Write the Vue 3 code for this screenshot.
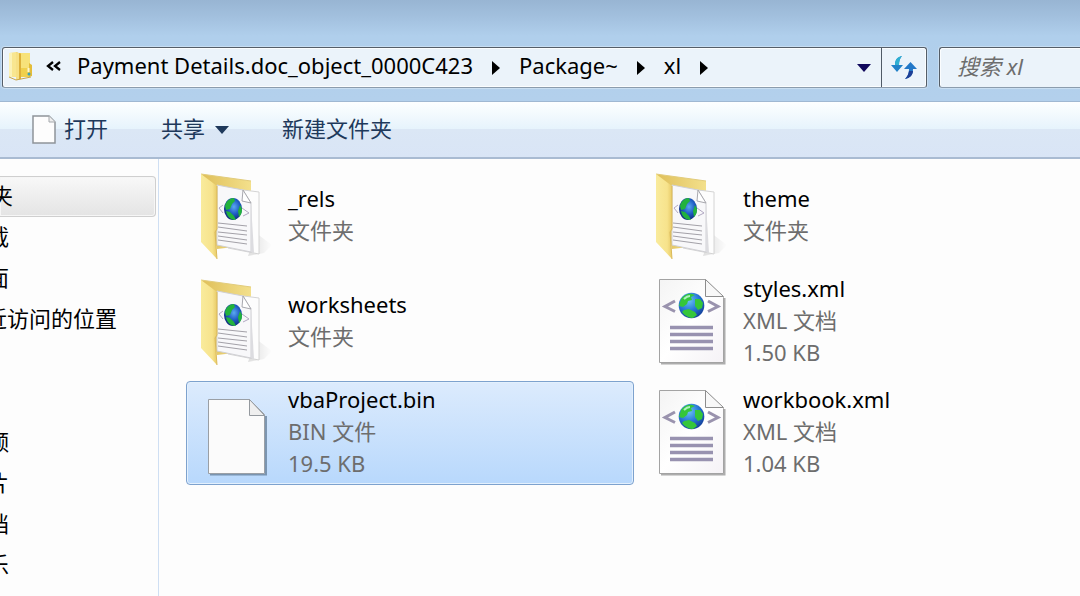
<script setup>
const crumbs = ['Payment Details.doc_object_0000C423', 'Package~', 'xl']

const favorites = [
  { label: '下载' },
  { label: '桌面' },
  { label: '最近访问的位置', wide: true },
]
const libraries = ['视频', '图片', '文档', '音乐']

const items = [
  { name: '_rels', type: '文件夹', kind: 'folder' },
  { name: 'theme', type: '文件夹', kind: 'folder' },
  { name: 'worksheets', type: '文件夹', kind: 'folder' },
  { name: 'styles.xml', type: 'XML 文档', size: '1.50 KB', kind: 'xml' },
  { name: 'vbaProject.bin', type: 'BIN 文件', size: '19.5 KB', kind: 'bin', selected: true },
  { name: 'workbook.xml', type: 'XML 文档', size: '1.04 KB', kind: 'xml' },
]
</script>

<template>
  <div class="window">
    <svg class="defs" width="0" height="0" aria-hidden="true">
      <defs>
        <linearGradient id="flap" x1="0" y1="0" x2="1" y2="0">
          <stop offset="0" stop-color="#f9eb9c" />
          <stop offset="0.7" stop-color="#f7e38c" />
          <stop offset="1" stop-color="#e8cb68" />
        </linearGradient>
        <linearGradient id="back" x1="0" y1="0" x2="1" y2="0">
          <stop offset="0" stop-color="#dfbf59" />
          <stop offset="1" stop-color="#f3e08c" />
        </linearGradient>
        <linearGradient id="paper" x1="0" y1="0" x2="1" y2="1">
          <stop offset="0" stop-color="#f4f4f4" />
          <stop offset="0.5" stop-color="#ffffff" />
          <stop offset="1" stop-color="#f5f2f6" />
        </linearGradient>
        <radialGradient id="sea" cx="0.4" cy="0.3" r="0.75">
          <stop offset="0" stop-color="#6cc4f4" />
          <stop offset="0.5" stop-color="#2a7bd8" />
          <stop offset="1" stop-color="#123a96" />
        </radialGradient>
        <radialGradient id="deep" cx="0.55" cy="0.4" r="0.65">
          <stop offset="0" stop-color="#5aa9f0" />
          <stop offset="0.5" stop-color="#1f5cc4" />
          <stop offset="1" stop-color="#0c2470" />
        </radialGradient>
        <linearGradient id="shade" x1="0" y1="0" x2="1" y2="0">
          <stop offset="0" stop-color="#000" stop-opacity="0.12" />
          <stop offset="1" stop-color="#000" stop-opacity="0" />
        </linearGradient>
      </defs>
    </svg>

    <header class="nav">
      <div class="address">
        <svg class="small-folder" width="26" height="30" viewBox="0 0 26 30" aria-hidden="true">
          <path d="M11 2h11v24H11z" fill="#f0d04c" />
          <path d="M13 2h9v15h-9z" fill="#f7e27a" />
          <path d="M21 12l3 2v11l-3 1z" fill="#e4bd3a" />
          <path d="M1 2l7-1v25H1z" fill="#f8e690" />
          <path d="M1 2l3 0v24H1z" fill="#fbf2b8" />
          <path d="M8 1l5 2v25l-5 1z" fill="#ddb03a" />
          <path d="M8 1l3 1v27l-3 0z" fill="#f6e085" />
          <path d="M1 26l7 3 5-1 10-2" fill="none" stroke="#c9a54a" />
          <circle cx="21" cy="23" r="1.500" fill="#3aa3b8" />
          <path d="M20.500 17v4" stroke="#fdf7cf" stroke-width="2" />
        </svg>
        <button class="overflow" aria-label="Previous locations">
          <svg width="16" height="10" viewBox="0 0 16 10">
            <path d="M7 1L2 5l5 4M14 1L9 5l5 4" fill="none" stroke="#000" stroke-width="2.300" />
          </svg>
        </button>
        <nav class="crumbs">
          <template v-for="crumb in crumbs" :key="crumb">
            <a href="#">{{ crumb }}</a>
            <svg class="arrow" width="8" height="14" viewBox="0 0 8 14" aria-hidden="true">
              <path d="M0 0l8 7-8 7z" fill="#000" />
            </svg>
          </template>
        </nav>
        <button class="history" aria-label="History">
          <svg width="14" height="8" viewBox="0 0 14 8"><path d="M0 0h14L7 8z" fill="#10085c" /></svg>
        </button>
        <button class="refresh" aria-label="Refresh">
          <svg width="26" height="26" viewBox="0 0 26 26">
            <path d="M11 1C6 2 4 5 4 10H0l6 7 6-7H8C8 6 9 3 11 1z" fill="#2181c8" />
            <path d="M11 1C6 2 4 5 4 10h4C8 6 9 3 11 1z" fill="#2fb0d2" />
            <path d="M14 24c5-1 8-4 8-10h4l-6.500-7-6.500 7h5c0 4-1 7-4 10z" fill="#2278c8" />
            <path d="M14 24c5-1 8-4 8-8h-4c-.5 3-2 6-4 8z" fill="#1d3f96" />
          </svg>
        </button>
      </div>
      <input class="search" type="text" placeholder="搜索 xl" aria-label="搜索 xl" />
    </header>

    <div class="toolbar">
      <button class="open">
        <svg width="24" height="29" viewBox="0 0 24 29" aria-hidden="true">
          <path d="M1 1h16l6 6v21H1z" fill="#fdfdfd" stroke="#8f9499" stroke-width="1.500" />
          <path d="M17 1v6h6" fill="#eee" stroke="#a5a9ad" />
        </svg>
        <span>打开</span>
      </button>
      <button class="share">
        <span>共享</span>
        <svg width="14" height="8" viewBox="0 0 14 8" aria-hidden="true"><path d="M0 0h14L7 8z" fill="#1e395b" /></svg>
      </button>
      <button><span>新建文件夹</span></button>
    </div>

    <div class="body">
      <aside class="sidebar">
        <a class="row root active" href="#"><span>收藏夹</span></a>
        <a v-for="f in favorites" :key="f.label" class="row" :class="{ wide: f.wide }" href="#"><span>{{ f.label }}</span></a>
        <div class="group">
          <a v-for="l in libraries" :key="l" class="row" href="#"><span>{{ l }}</span></a>
        </div>
      </aside>

      <main class="files">
        <button v-for="item in items" :key="item.name" class="item" :class="{ selected: item.selected }">
          <svg v-if="item.kind === 'folder'" class="icon" viewBox="0 0 100 86" aria-hidden="true">
            <path d="M68 60l16 12-8 8-16 3z" fill="url(#shade)" />
            <path d="M13 1l50 7v64l-34 4z" fill="url(#back)" />
            <path d="M13 1l50 7" stroke="#e2cc7c" fill="none" />
            <path d="M40 15l31 4v62l-31-6z" fill="#fdfdfd" stroke="#d4d4d4" />
            <path d="M29 12l26 5 8 13v49l-34-7z" fill="#f8f8fa" stroke="#d0d0d4" />
            <path d="M63 30l3 50-3-1z" fill="#dcdce0" />
            <path d="M55 17l-1 11 9 2z" fill="#fff" stroke="#a8a8ae" />
            <path d="M35 32l-4 3 4 5M54 35l7 5-6 3" fill="none" stroke="#b1a8c2" />
            <ellipse cx="45" cy="36" rx="9" ry="11" fill="url(#deep)" />
            <path d="M37 33c1-5 5-8 9-8l1 3-3 3-2 5-4 1zM38 38l4 1 4 4 2 4c-5 0-9-3-10-9zM52 32l2 4c0 4-1 6-3 8l-1-6z" fill="#22b23c" />
            <path d="M30 50l29 3M30 54l29 4M30 59l29 3M30 63l29 4M30 67l29 4" stroke="#a3a1a8" />
            <path d="M13 1l16 12v43l-2 3 2 27L13 69z" fill="url(#flap)" />
            <path d="M29 13v43l-2 3 2 27" fill="none" stroke="#dab95a" />
          </svg>

          <svg v-else-if="item.kind === 'xml'" class="icon" viewBox="0 0 100 86" aria-hidden="true">
            <path d="M18 84.500h63.500V19" fill="none" stroke="#8a8a8a" stroke-width="2" opacity="0.7" />
            <path d="M16.500 .5h46L80.500 18.500v65h-64z" fill="url(#paper)" stroke="#a3a3a3" />
            <path d="M62.500 .5v17h18z" fill="#f8f8f8" stroke="#8d8d8d" />
            <path d="M32 22l-10 5.500 10 5M65 22l10 5.500-10 5" fill="none" stroke="#9a93ae" stroke-width="3" />
            <circle cx="48.500" cy="26.500" r="12.800" fill="url(#sea)" />
            <path d="M38 20c3-4 7-6 11-5l3 1-4 2 1 3-4 1-1 3-4 3-4-1zM52 20l5 0 3 4-1 5-4 2-3-4zM41 31l5-1 6 3 2 3-4 3c-4 0-8-2-11-6z" fill="#35c63a" />
            <path d="M41 20c2-2 4-3 6-3" stroke="#aef0c0" stroke-width="2" fill="none" />
            <path d="M27 48.500h43M27 55.500h43M27 62.500h43M27 69.500h43" stroke="#9892b0" stroke-width="3.500" />
          </svg>

          <svg v-else class="icon" viewBox="0 0 100 86" aria-hidden="true">
            <path d="M22 84.500h56V26" fill="none" stroke="#5d7690" stroke-width="2" opacity="0.7" />
            <path d="M20.500 9.500h41l15 15v59h-56z" fill="#fbfbfb" stroke="#9a9fa5" />
            <path d="M61.500 9.500v16h15z" fill="#efefef" stroke="#94999e" />
          </svg>

          <span class="text">
            <span class="name">{{ item.name }}</span>
            <span>{{ item.type }}</span>
            <span v-if="item.size">{{ item.size }}</span>
          </span>
        </button>
      </main>
    </div>
  </div>
</template>

<style>
body {
  margin: 0;
}
</style>

<style scoped>
.window {
  display: flex;
  flex-direction: column;
  min-height: 100vh;
  overflow: hidden;
  background: #fdfdfd;
  font-family: "Noto Sans", "Noto Sans CJK SC", sans-serif;
  font-size: 22px;
  line-height: 32px;
  color: #000;
}
.defs {
  position: absolute;
}
button,
input {
  font: inherit;
  color: inherit;
  margin: 0;
  padding: 0;
  border: 0;
  background: none;
}
a {
  color: inherit;
  text-decoration: none;
}
svg {
  display: block;
  flex: none;
}

.nav {
  display: flex;
  gap: 12px;
  padding: 47px 0 13px 2px;
  background: linear-gradient(#98b5d3 0, #a3c1df 18px, #b0cfec 36px, #b3d0ec 100%);
  border-bottom: 1px solid #a0b8d2;
}
.address {
  flex: 1;
  display: flex;
  align-items: center;
  min-width: 0;
  height: 39px;
  border: 1px solid #555e68;
  border-bottom-color: #8b9cad;
  border-radius: 3px;
  background: #ebf3fa;
  box-shadow: 0 0 0 1px #c8def2, inset 0 0 0 1px #fbfdfe;
}
.small-folder {
  margin: 0 11px 4px 5px;
}
.overflow {
  margin: 0 15px 4px 1px;
}
.crumbs {
  flex: 1;
  display: flex;
  align-items: center;
  gap: 19px;
  min-width: 0;
  white-space: nowrap;
}
.crumbs a {
  padding-bottom: 6px;
}
.history {
  padding: 0 10px;
}
.refresh {
  align-self: stretch;
  display: flex;
  align-items: center;
  padding: 0 9px;
  border-left: 1px solid #4f5a66;
}
.search {
  flex: none;
  box-sizing: border-box;
  width: 141px;
  height: 41px;
  padding: 0 0 4px 17px;
  border: 1px solid #555e68;
  border-right: 0;
  border-bottom-color: #8b9cad;
  border-radius: 3px 0 0 3px;
  background: #ebf3fa;
  box-shadow: 0 0 0 1px #c8def2, inset 1px 1px 0 #fbfdfe;
}
.search::placeholder {
  color: #6d6d6d;
  font-style: italic;
  opacity: 1;
}

.toolbar {
  display: flex;
  align-items: center;
  gap: 53px;
  height: 55px;
  padding-left: 32px;
  border-bottom: 2px solid #a9bbd2;
  background: linear-gradient(#fdffff 0, #e6f3fc 27px, #dbe7f5 27px, #d9e5f6 100%);
  color: #1e395b;
}
.toolbar button {
  display: flex;
  align-items: center;
}
.toolbar span {
  padding-bottom: 4px;
}
.open {
  gap: 8px;
}
.share {
  gap: 10px;
}

.body {
  flex: 1;
  display: flex;
}
.sidebar {
  flex: none;
  box-sizing: border-box;
  width: 159px;
  padding-top: 17px;
  border-right: 1px solid #cfdff3;
}
.row {
  display: flex;
  align-items: center;
  box-sizing: border-box;
  height: 41px;
  margin-right: 2px;
  padding-bottom: 3px;
  white-space: nowrap;
}
.row span {
  margin-left: -35px;
}
.wide span {
  margin-left: -37px;
}
.root span {
  margin-left: -53px;
}
.active {
  border: 1px solid #cfcfcf;
  border-left: 0;
  border-radius: 0 4px 4px 0;
  background: linear-gradient(#f8f8f8, #e4e4e4);
  box-shadow: inset 0 0 0 1px #f6f6f6;
}
.group {
  margin-top: 82px;
}

.files {
  flex: 1;
  display: grid;
  grid-template-columns: 448px 448px;
  align-content: start;
  gap: 7px;
  padding: 10px 0 0 27px;
}
.item {
  display: flex;
  align-items: center;
  height: 104px;
  box-sizing: border-box;
  padding: 0 0 0 1px;
  border: 1px solid transparent;
  border-radius: 4px;
  text-align: left;
  color: #6d6d6d;
}
.item {
  height: auto;
  padding: 3px 0 3px 1px;
}
.selected {
  border-color: #7da2ce;
  background: linear-gradient(#dcebfd, #b8d8fc);
  box-shadow: inset 0 0 0 1px #e3f0fd;
}
.icon {
  width: 100px;
  height: 86px;
}
.text {
  display: flex;
  flex-direction: column;
  margin: -2px 0 2px;
}
.name {
  color: #000;
}
</style>
